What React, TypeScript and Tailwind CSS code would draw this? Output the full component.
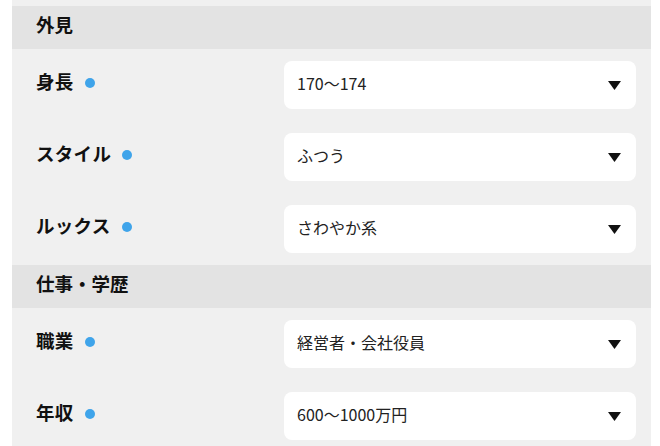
import React from 'react';

interface Field {
  label: string;
  value: string;
}

interface Section {
  title: string;
  fields: Field[];
}

const sections: Section[] = [
  {
    title: '外見',
    fields: [
      { label: '身長', value: '170〜174' },
      { label: 'スタイル', value: 'ふつう' },
      { label: 'ルックス', value: 'さわやか系' },
    ],
  },
  {
    title: '仕事・学歴',
    fields: [
      { label: '職業', value: '経営者・会社役員' },
      { label: '年収', value: '600〜1000万円' },
    ],
  },
];

const font = { fontFamily: '"Noto Sans CJK JP", "Noto Sans", sans-serif' };

const SelectBox: React.FC<{ value: string }> = ({ value }) => (
  <div className="flex h-[48px] w-[352px] items-center justify-between rounded-[8px] bg-white pl-[13px] pr-[15px]">
    <span className="pb-[4px] text-[16px] leading-none text-[#222]">{value}</span>
    <svg width="13" height="9" viewBox="0 0 13 9">
      <polygon points="0,0 13,0 6.5,9" fill="#111" />
    </svg>
  </div>
);

const App: React.FC = () => {
  return (
    <div className="h-[446px] w-[660px] overflow-hidden bg-white pl-[12px] pr-[9px]" style={font}>
      <div className="bg-[#f0f0f0] pt-[6px]">
        {sections.map((section) => (
          <div key={section.title}>
            <div className="flex h-[43px] items-center bg-[#e3e3e3] pl-[24px]">
              <span className="pb-[6px] text-[18.5px] font-bold leading-none text-[#111]">{section.title}</span>
            </div>
            {section.fields.map((field) => (
              <div key={field.label} className="flex h-[72px] items-center">
                <div className="flex w-[272px] items-center pb-[7px] pl-[24px]">
                  <span className="text-[18.5px] font-bold leading-none tracking-[0.3px] text-[#111]">{field.label}</span>
                  <span className="ml-[11px] mt-[2px] h-[10px] w-[10px] rounded-full bg-[#3fa4ea]" />
                </div>
                <SelectBox value={field.value} />
              </div>
            ))}
          </div>
        ))}
      </div>
    </div>
  );
};

export default App;
